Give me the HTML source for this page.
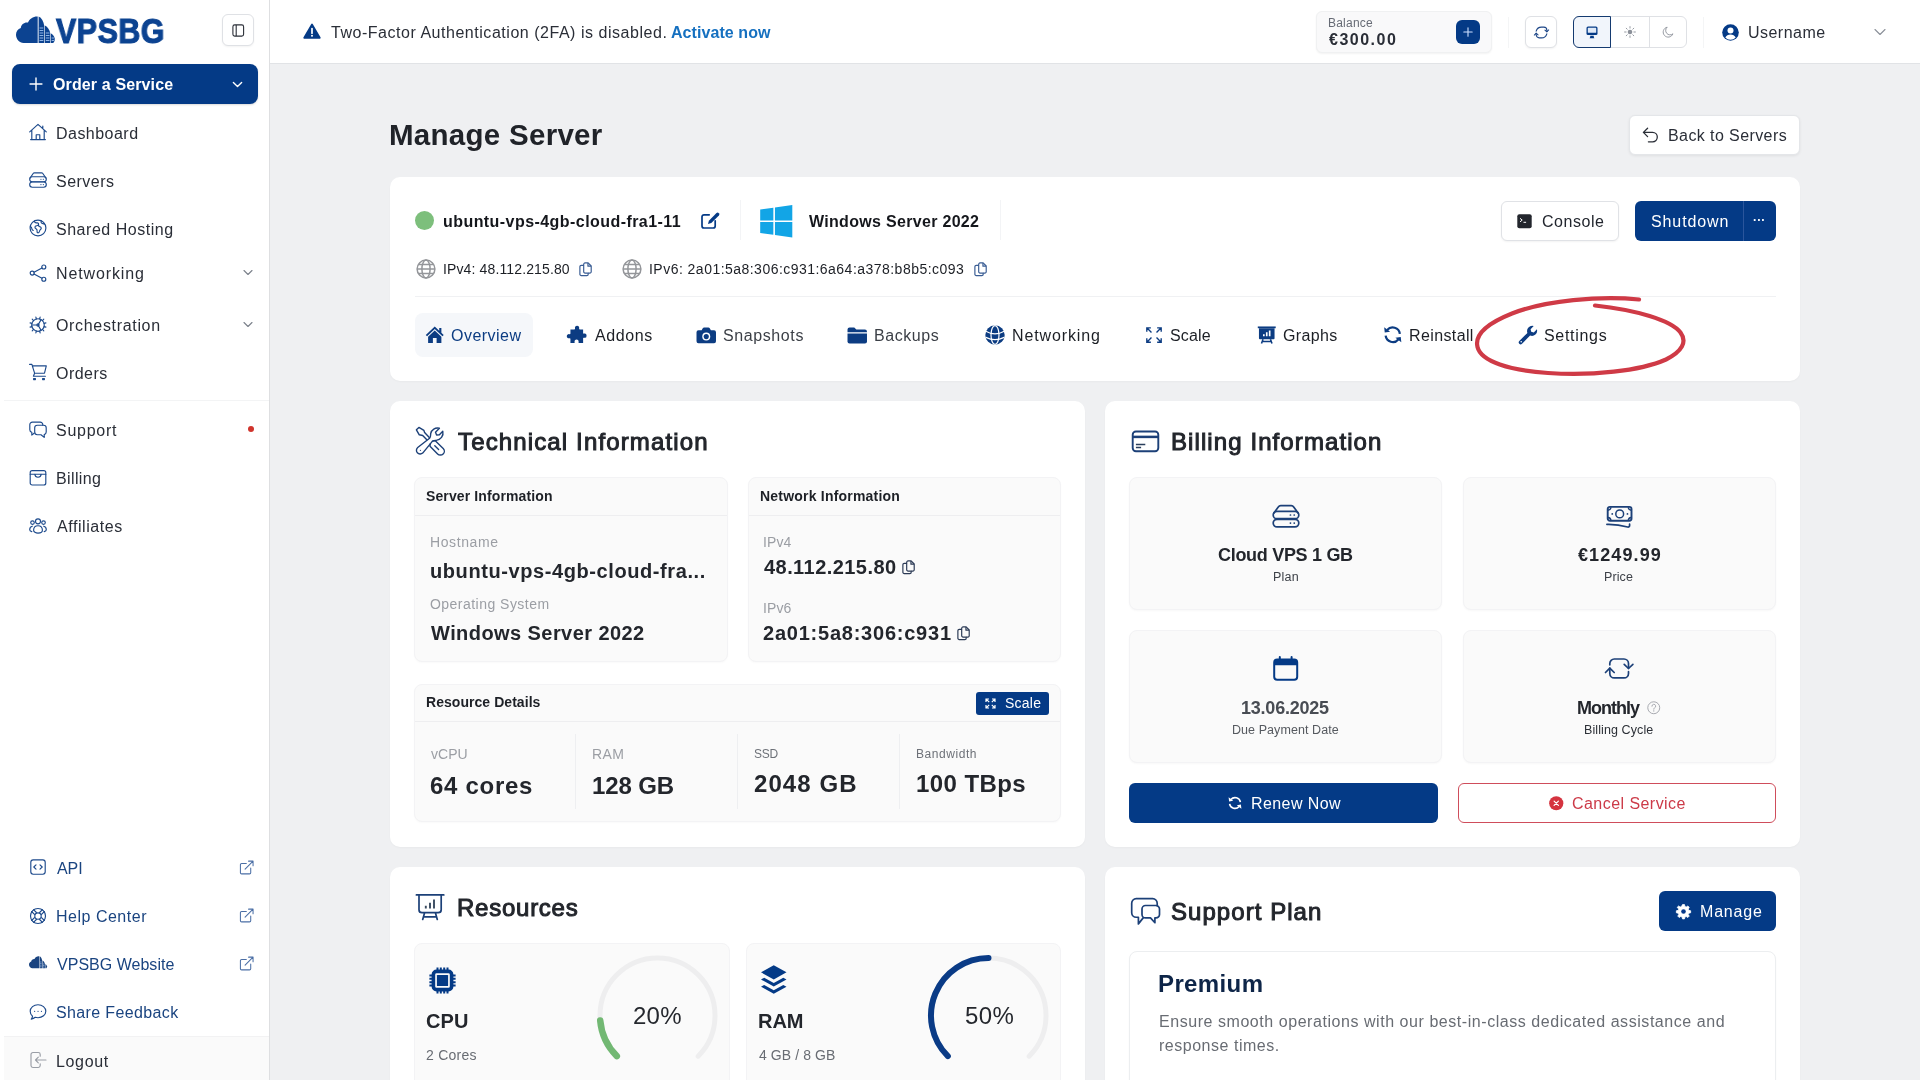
<!DOCTYPE html>
<html lang="en"><head><meta charset="utf-8"><title>Manage Server - VPSBG</title><style>
*{box-sizing:border-box}
html,body{margin:0;padding:0}
body{width:1920px;height:1080px;overflow:hidden;position:relative;background:#eff0f2;font-family:'Liberation Sans', sans-serif;color:#2a2e37}
.b{position:absolute}
.i{position:absolute;overflow:visible}
.t{position:absolute;white-space:pre;will-change:transform}
</style></head><body>
<div class="b" style="left:0px;top:0px;width:269px;height:1080px;background:#fff;"></div>
<div class="b" style="left:269px;top:0px;width:1px;height:1080px;background:#dedfe1;"></div>
<div class="b" style="left:270px;top:0px;width:1650px;height:63px;background:#fff;"></div>
<div class="b" style="left:270px;top:63px;width:1650px;height:1px;background:#e1e3e6;"></div>
<div class="b" style="left:222px;top:14px;width:32px;height:32px;background:#fff;border-radius:6px;border:1px solid #dfe1e5;box-shadow:0 1px 2px rgba(0,0,0,.05);"></div>
<div class="b" style="left:12px;top:64px;width:246px;height:40px;background:#043a86;border-radius:8px;box-shadow:0 1px 2px rgba(0,0,0,.15);"></div>
<div class="b" style="left:4px;top:400px;width:265px;height:1px;background:#f3f4f5;"></div>
<div class="b" style="left:247.5px;top:425.5px;width:6.5px;height:6.5px;background:#d0342c;border-radius:4px;"></div>
<div class="b" style="left:4px;top:1036px;width:265px;height:44px;background:#fafafa;border-top:1px solid #f2f2f3;"></div>
<div class="b" style="left:1316px;top:11px;width:176px;height:42px;background:#f9f9fa;border-radius:6px;border:1px solid #f0f1f2;box-shadow:0 1px 2px rgba(0,0,0,.05);"></div>
<div class="b" style="left:1456px;top:20px;width:24px;height:24px;background:#043a86;border-radius:6px;"></div>
<div class="b" style="left:1508px;top:17px;width:1px;height:31px;background:#f4f5f6;"></div>
<div class="b" style="left:1525px;top:16px;width:32px;height:32px;background:#fff;border-radius:6px;border:1px solid #dfe1e5;box-shadow:0 1px 2px rgba(0,0,0,.05);"></div>
<div class="b" style="left:1573px;top:16px;width:114px;height:32px;background:#fff;border-radius:6px;border:1px solid #dfe1e5;"></div>
<div class="b" style="left:1649px;top:17px;width:1px;height:30px;background:#dfe1e5;"></div>
<div class="b" style="left:1573px;top:16px;width:38px;height:32px;background:#f1f5fb;border:1px solid #143a70;border-radius:6px 0 0 6px;"></div>
<div class="b" style="left:1703px;top:17px;width:1px;height:31px;background:#f4f5f6;"></div>
<div class="b" style="left:1628.5px;top:115px;width:171px;height:39.5px;background:#fff;border-radius:6px;border:1px solid #e4e6e9;box-shadow:0 1px 3px rgba(0,0,0,.07);"></div>
<div class="b" style="left:390px;top:177px;width:1410px;height:203.5px;background:#fff;border-radius:10px;box-shadow:0 1px 2px rgba(0,0,0,.03);"></div>
<div class="b" style="left:414.5px;top:211px;width:19px;height:19px;background:#7dbf7c;border-radius:10px;"></div>
<div class="b" style="left:740px;top:200px;width:1px;height:40px;background:#f3f4f6;"></div>
<div class="b" style="left:1000px;top:200px;width:1px;height:40px;background:#f3f4f6;"></div>
<div class="b" style="left:415px;top:296px;width:1361px;height:1px;background:#f0f1f3;"></div>
<div class="b" style="left:414.5px;top:313px;width:118.5px;height:43.5px;background:#f5f7fa;border-radius:8px;"></div>
<div class="b" style="left:1501px;top:201px;width:117.5px;height:39.5px;background:#fff;border-radius:6px;border:1px solid #e0e2e6;box-shadow:0 1px 2px rgba(0,0,0,.05);"></div>
<div class="b" style="left:1635px;top:201px;width:141px;height:39.5px;background:#043a86;border-radius:6px;"></div>
<div class="b" style="left:1743px;top:201px;width:1px;height:39.5px;background:#2a559c;"></div>
<div class="b" style="left:390px;top:401px;width:695px;height:446px;background:#fff;border-radius:10px;box-shadow:0 1px 2px rgba(0,0,0,.03);"></div>
<div class="b" style="left:414px;top:477px;width:314px;height:185px;background:#fafafa;border-radius:8px;border:1px solid #f3f3f5;box-shadow:0 1px 2px rgba(0,0,0,.025);"></div>
<div class="b" style="left:415px;top:515px;width:312px;height:1px;background:#eeeef0;"></div>
<div class="b" style="left:748px;top:477px;width:312.5px;height:185px;background:#fafafa;border-radius:8px;border:1px solid #f3f3f5;box-shadow:0 1px 2px rgba(0,0,0,.025);"></div>
<div class="b" style="left:749px;top:515px;width:310.5px;height:1px;background:#eeeef0;"></div>
<div class="b" style="left:414px;top:684px;width:646.5px;height:138px;background:#fafafa;border-radius:8px;border:1px solid #f3f3f5;box-shadow:0 1px 2px rgba(0,0,0,.025);"></div>
<div class="b" style="left:415px;top:721.4px;width:644.5px;height:1px;background:#eeeef0;"></div>
<div class="b" style="left:976px;top:691.5px;width:72.5px;height:23.5px;background:#043a86;border-radius:3px;"></div>
<div class="b" style="left:575px;top:734px;width:1px;height:75px;background:#eeeff1;"></div>
<div class="b" style="left:737px;top:734px;width:1px;height:75px;background:#eeeff1;"></div>
<div class="b" style="left:899px;top:734px;width:1px;height:75px;background:#eeeff1;"></div>
<div class="b" style="left:1105px;top:401px;width:695px;height:446px;background:#fff;border-radius:10px;box-shadow:0 1px 2px rgba(0,0,0,.03);"></div>
<div class="b" style="left:1129px;top:477px;width:313px;height:132.5px;background:#fafafa;border-radius:8px;border:1px solid #f3f3f5;box-shadow:0 1px 2px rgba(0,0,0,.03);"></div>
<div class="b" style="left:1462.5px;top:477px;width:313.5px;height:132.5px;background:#fafafa;border-radius:8px;border:1px solid #f3f3f5;box-shadow:0 1px 2px rgba(0,0,0,.03);"></div>
<div class="b" style="left:1129px;top:630px;width:313px;height:132.5px;background:#fafafa;border-radius:8px;border:1px solid #f3f3f5;box-shadow:0 1px 2px rgba(0,0,0,.03);"></div>
<div class="b" style="left:1462.5px;top:630px;width:313.5px;height:132.5px;background:#fafafa;border-radius:8px;border:1px solid #f3f3f5;box-shadow:0 1px 2px rgba(0,0,0,.03);"></div>
<div class="b" style="left:1129px;top:783px;width:308.5px;height:40px;background:#043a86;border-radius:6px;"></div>
<div class="b" style="left:1458px;top:783px;width:318px;height:40px;background:#fff;border-radius:6px;border:1px solid #cf4d5b;"></div>
<div class="b" style="left:390px;top:867px;width:695px;height:240px;background:#fff;border-radius:10px;box-shadow:0 1px 2px rgba(0,0,0,.03);"></div>
<div class="b" style="left:414px;top:943px;width:315.5px;height:160px;background:#fafafa;border-radius:8px;border:1px solid #f3f3f5;"></div>
<div class="b" style="left:746px;top:943px;width:314.5px;height:160px;background:#fafafa;border-radius:8px;border:1px solid #f3f3f5;"></div>
<div class="b" style="left:1105px;top:867px;width:695px;height:240px;background:#fff;border-radius:10px;box-shadow:0 1px 2px rgba(0,0,0,.03);"></div>
<div class="b" style="left:1658.5px;top:891px;width:117.5px;height:40px;background:#043a86;border-radius:6px;"></div>
<div class="b" style="left:1129px;top:951px;width:647px;height:160px;background:#fff;border-radius:8px;border:1px solid #eceef0;box-shadow:0 1px 2px rgba(0,0,0,.03);"></div>
<svg class="i" style="left:231.8px;top:23.5px" width="12.5" height="13" viewBox="0 0 12.500 13" ><rect x=".9" y=".9" width="10.700" height="11.200" rx="1.800" fill="none" stroke="#2a2e37" stroke-width="1.100"/><path d="M4.200 .9v11.200" stroke="#2a2e37" stroke-width="1.100"/></svg>
<svg class="i" style="left:29px;top:77px" width="14" height="14" viewBox="0 0 16 16" ><path d="M8 1.2v13.6M1.2 8h13.6" stroke="#fff" stroke-width="1.6" stroke-linecap="round"/></svg>
<svg class="i" style="left:232px;top:79px" width="11" height="11" viewBox="0 0 16 16" ><path d="M2 5l6 6 6-6" fill="none" stroke="#fff" stroke-width="2" stroke-linecap="round" stroke-linejoin="round"/></svg>
<svg class="i" style="left:29px;top:123.30000000000001px" width="18" height="18" viewBox="0 0 18 18" ><path d="M.7 8.900L9 1.400l8.300 7.500M2.800 7.200v9.400M15.200 7.200v9.400M1.600 16.600h14.800M7.200 16.600v-4.900h3.600v4.900M13.800 5.400V3" fill="none" stroke="#1d4a8c" stroke-width="1.15" stroke-linecap="round" stroke-linejoin="round"/></svg>
<svg class="i" style="left:29px;top:171.3px" width="18" height="18" viewBox="0 0 18 18" ><rect x=".7" y="5.700" width="16.600" height="5" rx="2.500" fill="none" stroke="#1d4a8c" stroke-width="1.15" stroke-linecap="round" stroke-linejoin="round"/><rect x=".7" y="11" width="16.600" height="5.200" rx="2.600" fill="none" stroke="#1d4a8c" stroke-width="1.15" stroke-linecap="round" stroke-linejoin="round"/><path d="M1.100 7L4 2.700a2 2 0 0 1 1.600-.9h6.800a2 2 0 0 1 1.600.9L16.900 7" fill="none" stroke="#1d4a8c" stroke-width="1.15" stroke-linecap="round" stroke-linejoin="round"/><path d="M11.900 8.200h.1M14.300 8.200h.1M11.900 13.600h.1M14.300 13.600h.1" fill="none" stroke="#1d4a8c" stroke-width="1.15" stroke-linecap="round" stroke-linejoin="round"/></svg>
<svg class="i" style="left:29px;top:219.3px" width="18" height="18" viewBox="0 0 18 18" ><circle cx="9" cy="9" r="7.900" fill="none" stroke="#1d4a8c" stroke-width="1.15" stroke-linecap="round" stroke-linejoin="round"/><path d="M5.300 2.200c.3 1.300 1.300 1.900 2.600 1.700 1.400-.2 2 .8 1.500 1.800-.5 1-1.800.9-2.700 1.400-1 .6-.9 1.900.1 2.500 1 .6 1.600 1.300 1.300 2.600-.2 1 .3 1.700 1 1.700.9 0 1.300-.9 1.500-1.900.2-1 1.100-1.400 1.500-2.300.4-.9-.2-1.800-1.200-2-1-.2-1.500-.9-1.200-1.700M12.300 1.900c-.5.900-.3 1.800.5 2.300.9.500 1.900.3 2.700 1M1.300 7.600c.9.300 1.500 1 1.500 1.900 0 .9.600 1.500 1.400 1.900" fill="none" stroke="#1d4a8c" stroke-width="1.15" stroke-linecap="round" stroke-linejoin="round"/></svg>
<svg class="i" style="left:29px;top:263.6px" width="18" height="18" viewBox="0 0 18 18" ><circle cx="14.800" cy="3" r="2" fill="none" stroke="#1d4a8c" stroke-width="1.15" stroke-linecap="round" stroke-linejoin="round"/><circle cx="3.200" cy="9.100" r="2" fill="none" stroke="#1d4a8c" stroke-width="1.15" stroke-linecap="round" stroke-linejoin="round"/><circle cx="14.800" cy="15.200" r="2" fill="none" stroke="#1d4a8c" stroke-width="1.15" stroke-linecap="round" stroke-linejoin="round"/><path d="M5 8.200l8-4.200M5 10l8 4.200" fill="none" stroke="#1d4a8c" stroke-width="1.15" stroke-linecap="round" stroke-linejoin="round"/></svg>
<svg class="i" style="left:29px;top:315.8px" width="18" height="18" viewBox="0 0 18 18" ><circle cx="9" cy="9" r="6.300" fill="none" stroke="#1d4a8c" stroke-width="1.15" stroke-linecap="round" stroke-linejoin="round"/><path d="M15.09 10.63L16.92 11.12M13.45 13.45L14.80 14.80M10.63 15.09L11.12 16.92M7.37 15.09L6.88 16.92M4.55 13.45L3.20 14.80M2.91 10.63L1.08 11.12M2.91 7.37L1.08 6.88M4.55 4.55L3.20 3.20M7.37 2.91L6.88 1.08M10.63 2.91L11.12 1.08M13.45 4.55L14.80 3.20M15.09 7.37L16.92 6.88" fill="none" stroke="#1d4a8c" stroke-width="1.15" stroke-linecap="round" stroke-linejoin="round" stroke-width="1.500" stroke-linecap="butt"/><path d="M9 9L2.800 9M9 9l3.100 5.400M9 9l3.100-5.400" fill="none" stroke="#1d4a8c" stroke-width="1.15" stroke-linecap="round" stroke-linejoin="round"/><circle cx="9" cy="9" r="1.100" fill="none" stroke="#1d4a8c" stroke-width="1.15" stroke-linecap="round" stroke-linejoin="round"/></svg>
<svg class="i" style="left:29px;top:363.3px" width="18" height="18" viewBox="0 0 18 18" ><path d="M.6 1.400h2.300l1 3M3.300 2.900h14l-1.800 7.300H5.600zM5.600 10.200l-1.200 3h12" fill="none" stroke="#1d4a8c" stroke-width="1.15" stroke-linecap="round" stroke-linejoin="round"/><path d="M4.600 15.600h1.800v1h-1.800zM13.600 15.600h1.800v1h-1.800z" fill="none" stroke="#1d4a8c" stroke-width="1.15" stroke-linecap="round" stroke-linejoin="round"/></svg>
<svg class="i" style="left:29px;top:421px" width="18" height="18" viewBox="0 0 18 18" ><path d="M13.800 4.200V3.700a2.600 2.600 0 0 0-2.600-2.600H3.400A2.600 2.600 0 0 0 .8 3.700v5a2.600 2.600 0 0 0 2 2.500v2.900l2.300-1.900" fill="none" stroke="#1d4a8c" stroke-width="1.15" stroke-linecap="round" stroke-linejoin="round"/><path d="M8.300 4.200h6.300a2.600 2.600 0 0 1 2.600 2.600v4.300a2.600 2.600 0 0 1-2 2.500v2.800l-3.200-2.700H8.300a2.600 2.600 0 0 1-2.600-2.600V6.800a2.600 2.600 0 0 1 2.600-2.600z" fill="none" stroke="#1d4a8c" stroke-width="1.15" stroke-linecap="round" stroke-linejoin="round"/></svg>
<svg class="i" style="left:29px;top:469px" width="18" height="18" viewBox="0 0 18 18" ><rect x="1.200" y="1.600" width="15.600" height="14.400" rx="2" fill="none" stroke="#1d4a8c" stroke-width="1.15" stroke-linecap="round" stroke-linejoin="round"/><path d="M1.200 5.200h15.600M5.800 5.200c.2 1.900 1.500 3 3.200 3s3-1.100 3.200-3" fill="none" stroke="#1d4a8c" stroke-width="1.15" stroke-linecap="round" stroke-linejoin="round"/></svg>
<svg class="i" style="left:29px;top:517px" width="18" height="18" viewBox="0 0 18 18" ><circle cx="9" cy="4.300" r="2.500" fill="none" stroke="#1d4a8c" stroke-width="1.15" stroke-linecap="round" stroke-linejoin="round"/><path d="M4.600 13.300c0-2.900 1.900-4.600 4.400-4.600s4.400 1.700 4.400 4.600c0 1.600-2 2.800-4.400 2.800s-4.400-1.200-4.400-2.800z" fill="none" stroke="#1d4a8c" stroke-width="1.15" stroke-linecap="round" stroke-linejoin="round"/><circle cx="3.500" cy="5.600" r="1.800" fill="none" stroke="#1d4a8c" stroke-width="1.15" stroke-linecap="round" stroke-linejoin="round"/><circle cx="14.500" cy="5.600" r="1.800" fill="none" stroke="#1d4a8c" stroke-width="1.15" stroke-linecap="round" stroke-linejoin="round"/><path d="M3.300 9.200C1.700 9.500.7 10.900.7 12.700c0 .9.900 1.600 2.100 1.900M14.700 9.200c1.600.3 2.600 1.700 2.600 3.500 0 .9-.9 1.600-2.100 1.900" fill="none" stroke="#1d4a8c" stroke-width="1.15" stroke-linecap="round" stroke-linejoin="round"/></svg>
<svg class="i" style="left:243px;top:267.5px" width="10" height="9" viewBox="0 0 10 9" ><path d="M1 2.500l4 4 4-4" fill="none" stroke="#7a808a" stroke-width="1.1" stroke-linecap="round" stroke-linejoin="round"/></svg>
<svg class="i" style="left:243px;top:319.5px" width="10" height="9" viewBox="0 0 10 9" ><path d="M1 2.500l4 4 4-4" fill="none" stroke="#7a808a" stroke-width="1.1" stroke-linecap="round" stroke-linejoin="round"/></svg>
<svg class="i" style="left:29px;top:858.3px" width="18" height="18" viewBox="0 0 18 18" ><rect x="1.800" y="1.800" width="14.400" height="14.400" rx="2.400" fill="none" stroke="#1d4a8c" stroke-width="1.15" stroke-linecap="round" stroke-linejoin="round"/><path d="M7 6.800L4.800 9 7 11.200M11 6.800L13.200 9 11 11.200" fill="none" stroke="#1d4a8c" stroke-width="1.15" stroke-linecap="round" stroke-linejoin="round"/></svg>
<svg class="i" style="left:29px;top:907px" width="18" height="18" viewBox="0 0 18 18" ><circle cx="9" cy="9" r="7.500" fill="none" stroke="#1d4a8c" stroke-width="1.15" stroke-linecap="round" stroke-linejoin="round"/><circle cx="9" cy="9" r="3.200" fill="none" stroke="#1d4a8c" stroke-width="1.15" stroke-linecap="round" stroke-linejoin="round"/><path d="M4.500 2.600l2.900 2.900M2.600 4.500l2.900 2.900M13.500 2.600l-2.900 2.900M15.400 4.500l-2.900 2.900M4.500 15.400l2.900-2.900M2.600 13.500l2.900-2.900M13.500 15.400l-2.900-2.900M15.400 13.500l-2.900-2.900" fill="none" stroke="#1d4a8c" stroke-width="1.15" stroke-linecap="round" stroke-linejoin="round" stroke-width=".9"/></svg>
<svg class="i" style="left:29px;top:954.3px" width="18" height="18" viewBox="0 0 18 18" ><path d="M10 2.200C8.100 2 6.300 3.100 5.500 4.900 3.900 4.700 2.400 5.800 2.200 7.400.900 7.900 0 9.100 0 10.500c0 1.900 1.500 3.700 3.400 3.700H10z" fill="#1a4480"/><path d="M10.500 2.200c1.400.5 2.300 2.100 2.600 4.400v7.600h-2.600z" fill="#1a4480"/><path d="M13.500 6.400c1.300.6 2.200 2 2.500 3.800v4h-2.500z" fill="#1a4480"/><path d="M16.400 10.100c.8.500 1.400 1.200 1.600 2.200.1.800-.1 1.400-.6 1.900h-1z" fill="#1a4480"/><path d="M11 8h1.600M11 9.600h1.600M11 11.200h1.600M11 12.800h1.600M14 10h1.500M14 11.500h1.500M14 13h1.500" stroke="#9bb8e4" stroke-width=".7"/></svg>
<svg class="i" style="left:29px;top:1002.8px" width="18" height="18" viewBox="0 0 18 18" ><path d="M9 1.700c4.300 0 7.800 2.900 7.800 6.500s-3.500 6.500-7.800 6.500c-1 0-1.900-.100-2.800-.400-1 .9-2.300 1.600-3.900 1.800.7-.9 1.100-1.900 1.200-2.900-1.400-1.200-2.300-3-2.300-5 0-3.600 3.500-6.500 7.800-6.500z" fill="none" stroke="#1d4a8c" stroke-width="1.15" stroke-linecap="round" stroke-linejoin="round"/><path d="M5.600 8.300h.1M9 8.300h.1M12.400 8.300h.1" fill="none" stroke="#1d4a8c" stroke-width="1.15" stroke-linecap="round" stroke-linejoin="round" stroke-width="1.600"/></svg>
<svg class="i" style="left:29px;top:1051.3px" width="18" height="18" viewBox="0 0 18 18" ><path d="M11.200 5.200V3.400A1.900 1.900 0 0 0 9.300 1.500H3.900A1.900 1.900 0 0 0 2 3.400v11.200a1.900 1.900 0 0 0 1.900 1.900h5.400a1.900 1.900 0 0 0 1.900-1.900v-1.800" fill="none" stroke="#9a9ea6" stroke-width="1.150" stroke-linecap="round" stroke-linejoin="round"/><path d="M17 9H6.500M9.300 6.200L6.500 9l2.800 2.800" fill="none" stroke="#9a9ea6" stroke-width="1.150" stroke-linecap="round" stroke-linejoin="round"/></svg>
<svg class="i" style="left:238.5px;top:859.5px" width="15" height="15" viewBox="0 0 16 16" ><path d="M12.500 8.500v5a1.300 1.300 0 0 1-1.300 1.300H2.800a1.300 1.300 0 0 1-1.300-1.300V5.100a1.300 1.300 0 0 1 1.300-1.300h5" fill="none" stroke="#4a6ea5" stroke-width="1.100" stroke-linecap="round"/><path d="M6.500 9.800L15 1.300M10.200 1.200H15v4.800" fill="none" stroke="#4a6ea5" stroke-width="1.100" stroke-linecap="round" stroke-linejoin="round"/></svg>
<svg class="i" style="left:238.5px;top:907.5px" width="15" height="15" viewBox="0 0 16 16" ><path d="M12.500 8.500v5a1.300 1.300 0 0 1-1.300 1.300H2.800a1.300 1.300 0 0 1-1.300-1.300V5.100a1.300 1.300 0 0 1 1.300-1.300h5" fill="none" stroke="#4a6ea5" stroke-width="1.100" stroke-linecap="round"/><path d="M6.500 9.800L15 1.300M10.200 1.200H15v4.800" fill="none" stroke="#4a6ea5" stroke-width="1.100" stroke-linecap="round" stroke-linejoin="round"/></svg>
<svg class="i" style="left:238.5px;top:955.5px" width="15" height="15" viewBox="0 0 16 16" ><path d="M12.500 8.500v5a1.300 1.300 0 0 1-1.300 1.300H2.800a1.300 1.300 0 0 1-1.300-1.300V5.100a1.300 1.300 0 0 1 1.300-1.300h5" fill="none" stroke="#4a6ea5" stroke-width="1.100" stroke-linecap="round"/><path d="M6.500 9.800L15 1.300M10.200 1.200H15v4.800" fill="none" stroke="#4a6ea5" stroke-width="1.100" stroke-linecap="round" stroke-linejoin="round"/></svg>
<svg class="i" style="left:16px;top:16px" width="39" height="28" viewBox="0 0 39 28" ><path d="M21.7 0.500C17.500 0.200 13.600 2.600 12 6.500 8.400 5.900 5.200 8.400 4.800 11.900 1.900 12.900 0 15.600 0 18.700c0 4.200 3.400 8.300 7.600 8.300H21.700z" fill="#0c4391"/>
<path d="M22.600 0.400c3 1.200 5 4.600 5.700 9.600V27h-5.700z" fill="#0c4391"/>
<path d="M28.900 9.400c2.800 1.400 4.800 4.400 5.500 8.300V27h-5.500z" fill="#0c4391"/>
<path d="M35 17.600c1.800 1 3.200 2.600 3.700 4.900.3 1.800-.3 3.400-1.500 4.500H35z" fill="#0c4391"/>
<path d="M23.600 12h3.700M23.600 14.500h3.700M23.600 17h3.700M23.600 19.500h3.700M23.600 22h3.700M23.600 24.500h3.700M29.800 17h3.700M29.800 19.500h3.700M29.800 22h3.700M29.800 24.500h3.700M35.600 22h2.400M35.600 24.500h2.400" stroke="#8fb4e6" stroke-width="1.200"/></svg>
<span class="t" style="left:56.200px;top:10.900px;font-size:34.500px;line-height:40px;font-weight:700;color:#0c4391;-webkit-text-stroke:1.100px #0c4391;letter-spacing:.6px;transform-origin:0 0;transform:scaleX(.881)">VPSBG</span>
<svg class="i" style="left:303px;top:23px" width="18" height="16" viewBox="0 0 18 16" ><path d="M9.900 1.200l7.600 13a1.100 1.100 0 0 1-.95 1.650H1.450A1.100 1.100 0 0 1 .5 14.200L8.100 1.200a1.050 1.050 0 0 1 1.800 0z" fill="#043a86"/><path d="M9 5.600v4.600" stroke="#fff" stroke-width="1.700" stroke-linecap="round"/><circle cx="9" cy="12.700" r="1" fill="#fff"/></svg>
<svg class="i" style="left:1463px;top:27px" width="10" height="10" viewBox="0 0 10 10" ><path d="M5 .8v8.400M.8 5h8.400" stroke="#cfe0ff" stroke-width="1.100" stroke-linecap="round"/></svg>
<svg class="i" style="left:1533.5px;top:24.5px" width="15" height="15" viewBox="0 0 16 16" ><path d="M2.300 6.600A5.900 5.900 0 0 1 8 2.300h2.500a3.200 3.200 0 0 1 3.200 3.200v1.400M13.700 9.400A5.900 5.900 0 0 1 8 13.700H5.500a3.200 3.200 0 0 1-3.200-3.200V9.100" fill="none" stroke="#1d4687" stroke-width="1.15" stroke-linecap="round"/><path d="M11.700 5.400l2 1.900 1.900-2M4.300 10.600l-2-1.900-1.900 2" fill="none" stroke="#1d4687" stroke-width="1.15" stroke-linecap="round" stroke-linejoin="round"/></svg>
<svg class="i" style="left:1586px;top:25.5px" width="12" height="13" viewBox="0 0 12 13" ><rect x=".5" y=".5" width="11" height="8.600" rx="1.500" fill="#043a86"/><rect x="1.800" y="1.800" width="8.400" height="5" rx=".6" fill="#dfe9f7"/><path d="M3.600 12.300c.5-.8.700-1.500.7-2.600h3.400c0 1.100.2 1.800.7 2.600z" fill="#043a86"/></svg>
<svg class="i" style="left:1624px;top:26px" width="12" height="12" viewBox="0 0 12 12" ><circle cx="6" cy="6" r="2.300" fill="#8b9099"/><path d="M6 .6v1.500M6 9.900v1.500M.6 6h1.500M9.900 6h1.500M2.200 2.200l1 1M8.800 8.800l1 1M2.200 9.800l1-1M8.800 3.200l1-1" stroke="#8b9099" stroke-width=".9" stroke-linecap="round"/></svg>
<svg class="i" style="left:1662px;top:26px" width="12" height="12" viewBox="0 0 12 12" ><path d="M5.200 1.200A5 5 0 1 0 10.900 7.800 4.300 4.300 0 0 1 5.200 1.200z" fill="none" stroke="#8b9099" stroke-width=".9" stroke-linejoin="round"/></svg>
<svg class="i" style="left:1721.5px;top:23.5px" width="17" height="17" viewBox="0 0 17 17" ><circle cx="8.500" cy="8.500" r="8.300" fill="#043a86"/><circle cx="8.500" cy="6.600" r="3" fill="#fff"/><path d="M3.300 13.400c1-2 2.900-3 5.200-3s4.200 1 5.200 3a6.600 6.600 0 0 1-5.200 2.400 6.600 6.600 0 0 1-5.200-2.400z" fill="#fff"/></svg>
<svg class="i" style="left:1874px;top:28px" width="12" height="8" viewBox="0 0 12 8" ><path d="M1 1.500l5 5 5-5" fill="none" stroke="#8b9099" stroke-width="1.100" stroke-linecap="round" stroke-linejoin="round"/></svg>
<svg class="i" style="left:1641.5px;top:126px" width="18" height="18" viewBox="0 0 18 18" ><path d="M5.600 2.200L1.400 6.400l4.200 4.200M1.400 6.400h9.200a4.700 4.700 0 0 1 0 9.400H6.400" fill="none" stroke="#2a2e37" stroke-width="1.300" stroke-linecap="round" stroke-linejoin="round"/></svg>
<svg class="i" style="left:701px;top:212px" width="18" height="17" viewBox="0 0 18 17" ><path d="M15.500 1.100a1.700 1.700 0 0 1 2.400 2.400l-7.600 7.600-3.300.9.900-3.300z" fill="#043a86"/><path d="M8.200 2.800H3a2 2 0 0 0-2 2V14a2 2 0 0 0 2 2h9.200a2 2 0 0 0 2-2V8.800" fill="none" stroke="#043a86" stroke-width="1.700" stroke-linecap="round"/></svg>
<svg class="i" style="left:759.5px;top:204.5px" width="32.5" height="32.5" viewBox="0 0 32 32.400" ><path d="M0 4.600L13.100 2.800V15.400H0zM14.700 2.600L32 0v15.400H14.700zM0 17h13.100v12.600L0 27.800zM14.700 17H32v15.400L14.700 29.800z" fill="#12a5e6"/></svg>
<svg class="i" style="left:415.5px;top:258.5px" width="20" height="20" viewBox="0 0 20 20" ><circle cx="10" cy="10" r="8.900" fill="none" stroke="#94969a" stroke-width="1.5"/><ellipse cx="10" cy="10" rx="4.100" ry="8.900" fill="none" stroke="#94969a" stroke-width="1.5"/><path d="M1.100 10h17.800M2.400 5.600h15.200M2.400 14.400h15.200" fill="none" stroke="#94969a" stroke-width="1.5"/></svg>
<svg class="i" style="left:579px;top:262px" width="13" height="14.5" viewBox="0 0 14 16" ><path d="M5 3.700V2.500A1.500 1.500 0 0 1 6.500 1h3.400l3.400 3.400v6.300a1.500 1.500 0 0 1-1.500 1.500H10" fill="none" stroke="#3a5d94" stroke-width="1.3" stroke-linejoin="round"/><path d="M9.700 1.200v3.400h3.400" fill="none" stroke="#3a5d94" stroke-width="1.3" stroke-linejoin="round"/><path d="M5 3.700H2.300A1.500 1.500 0 0 0 .8 5.200v8.300A1.500 1.500 0 0 0 2.300 15h6.200A1.500 1.500 0 0 0 10 13.500V12.200H6.500A1.500 1.500 0 0 1 5 10.700z" fill="none" stroke="#3a5d94" stroke-width="1.3" stroke-linejoin="round"/></svg>
<svg class="i" style="left:622px;top:258.5px" width="20" height="20" viewBox="0 0 20 20" ><circle cx="10" cy="10" r="8.900" fill="none" stroke="#94969a" stroke-width="1.5"/><ellipse cx="10" cy="10" rx="4.100" ry="8.900" fill="none" stroke="#94969a" stroke-width="1.5"/><path d="M1.100 10h17.800M2.400 5.600h15.200M2.400 14.400h15.200" fill="none" stroke="#94969a" stroke-width="1.5"/></svg>
<svg class="i" style="left:974px;top:262px" width="13" height="14.5" viewBox="0 0 14 16" ><path d="M5 3.700V2.500A1.500 1.500 0 0 1 6.500 1h3.400l3.400 3.400v6.300a1.500 1.500 0 0 1-1.500 1.500H10" fill="none" stroke="#3a5d94" stroke-width="1.3" stroke-linejoin="round"/><path d="M9.700 1.200v3.400h3.400" fill="none" stroke="#3a5d94" stroke-width="1.3" stroke-linejoin="round"/><path d="M5 3.700H2.300A1.500 1.500 0 0 0 .8 5.200v8.300A1.500 1.500 0 0 0 2.300 15h6.200A1.500 1.500 0 0 0 10 13.500V12.200H6.500A1.500 1.500 0 0 1 5 10.700z" fill="none" stroke="#3a5d94" stroke-width="1.3" stroke-linejoin="round"/></svg>
<svg class="i" style="left:425px;top:325.25px" width="19.5" height="19.5" viewBox="0 0 20 20" ><path d="M10 1.600L.8 10.300l1.300 1.300L10 4.200l7.900 7.400 1.300-1.300-2.400-2.300V3h-2.200v2.900z" fill="#0c3c82"/><path d="M10 5.700l-6.800 6.400v6.300h4.900v-5h3.800v5h4.900v-6.300z" fill="#0c3c82"/></svg>
<svg class="i" style="left:567.5px;top:325.25px" width="19.5" height="19.5" viewBox="0 0 20 20" ><path d="M7.200 3.600a2.200 2.200 0 1 1 4.200 0c-.1.500.1.900.6.900h3.500v3.800c0 .5.400.7.900.5a2.200 2.200 0 1 1 0 4.300c-.5-.2-.9 0-.9.500v4.900h-4.200c-.5 0-.7-.4-.5-.9a2.100 2.100 0 1 0-4 0c.2.500 0 .9-.5.900H2.500v-4.300c0-.5-.4-.7-.9-.6a2.200 2.200 0 1 1 0-4.200c.5.100.9-.1.900-.6V4.500h4.100c.5 0 .7-.4.600-.9z" fill="#0c3c82"/></svg>
<svg class="i" style="left:696px;top:324.75px" width="20.5" height="20.5" viewBox="0 0 20 20" ><path d="M6.600 3.200L5.500 5.200H2.400A1.900 1.900 0 0 0 .5 7.100v8.800a1.900 1.900 0 0 0 1.900 1.900h15.200a1.900 1.900 0 0 0 1.900-1.900V7.100a1.900 1.900 0 0 0-1.900-1.900h-3.100l-1.100-2a1.500 1.500 0 0 0-1.300-.8H7.900a1.500 1.500 0 0 0-1.300.8z" fill="#0c3c82"/><circle cx="10" cy="11.300" r="3.900" fill="#fff"/><circle cx="10" cy="11.300" r="2.500" fill="#0c3c82"/></svg>
<svg class="i" style="left:847.4px;top:324.75px" width="20.5" height="20.5" viewBox="0 0 20 20" ><path d="M.5 4.500A2 2 0 0 1 2.500 2.500h4.600l2 2h8.400a2 2 0 0 1 2 2v.5H.5z" fill="#0c3c82"/><path d="M.5 8.300h19v7.700a2 2 0 0 1-2 2h-15a2 2 0 0 1-2-2z" fill="#0c3c82"/></svg>
<svg class="i" style="left:984.5px;top:325.0px" width="20" height="20" viewBox="0 0 20 20" ><circle cx="10" cy="10" r="9.700" fill="#0c3c82"/><ellipse cx="10" cy="10" rx="4" ry="9.400" fill="none" stroke="#fff" stroke-width="1.200"/><path d="M.8 6.200Q10 11.400 19.200 6.200M.8 12.400Q10 17 19.200 12.400" fill="none" stroke="#fff" stroke-width="1.200"/></svg>
<svg class="i" style="left:1145px;top:326.0px" width="18" height="18" viewBox="0 0 20 20" ><path d="M2 6.500V2h4.500M2.300 2.300l4.900 4.900M13.500 2H18v4.500M17.700 2.300l-4.900 4.900M2 13.500V18h4.500M2.300 17.700l4.900-4.900M18 13.500V18h-4.500M17.700 17.700l-4.900-4.900" fill="none" stroke="#0c3c82" stroke-width="1.500"/></svg>
<svg class="i" style="left:1257px;top:325.25px" width="19.5" height="19.5" viewBox="0 0 20 20" ><path d="M.8 1.500h18.400v1.800H.8z" fill="#0c3c82"/><path d="M2 3.300h16v10.200a1 1 0 0 1-1 1H3a1 1 0 0 1-1-1z" fill="#0c3c82"/><path d="M7 11.500V9.400M10 11.500V7.400M13 11.500V5.600" stroke="#fff" stroke-width="1.700"/><path d="M6.200 14.500L4.600 19M13.800 14.500l1.600 4.500M5.500 17h9" stroke="#0c3c82" stroke-width="1.600"/></svg>
<svg class="i" style="left:1383.3px;top:325.25px" width="19.5" height="19.5" viewBox="0 0 20 20" ><path d="M17.300 9A7.400 7.400 0 0 0 4.300 5.200M2.700 11a7.400 7.400 0 0 0 13 3.800" fill="none" stroke="#0c3c82" stroke-width="2.300"/><path d="M1.200 2.200l.6 5.600 5.500-1zM18.800 17.800l-.6-5.600-5.500 1z" fill="#0c3c82"/></svg>
<svg class="i" style="left:1517.6px;top:325.0px" width="20" height="20" viewBox="0 0 20 20" ><path d="M18.900 4.300l-3.100 3.100-2.600-.6-.6-2.600L15.700 1.100A5.200 5.200 0 0 0 9.400 7.900L1.300 16a1.900 1.900 0 0 0 2.700 2.700l8.100-8.100a5.200 5.200 0 0 0 6.800-6.300zM3.200 17.600a.8.800 0 1 1 0-1.600.8.800 0 0 1 0 1.600z" fill="#0c3c82"/></svg>
<svg class="i" style="left:1517px;top:213.5px" width="15" height="14.5" viewBox="0 0 15 14.500" ><rect x=".3" y=".3" width="14.400" height="13.900" rx="2" fill="#23262d"/><path d="M3 4.300l2.200 1.800L3 7.900M6.500 8.300h2.600" fill="none" stroke="#fff" stroke-width="1"/></svg>
<svg class="i" style="left:1460px;top:285px" width="240" height="100" viewBox="1460 285 240 100"><path d="M1639 299.500C1600 295.500 1545 300.500 1512 313.500 1487 323.500 1474.500 335 1477.500 347 1481 361.500 1510 370.500 1548 373 1592 376 1640 371 1666 359.500 1682 351.500 1687.500 342 1680.500 332.500 1671 320 1636 310 1595 305.500" fill="none" stroke="#cf3a46" stroke-width="4.200" stroke-linecap="round"/></svg>
<svg class="i" style="left:416px;top:427px" width="28" height="28" viewBox="0 0 28 28" ><path d="M23.400 1.300C19.400 .3 15.300 2.500 14.700 6.700c-.2 1.700.1 3.300-1.100 4.500L1.700 20.500a3.600 3.600 0 0 0 5 5.600l9.400-11.500c1-1.200 2.500-1 4.100-1.200 4.400-.6 7.700-4.400 6.600-9.100l-3.400 3.500-2.800.2-1.100-2.700z" fill="none" stroke="#1c4078" stroke-width="1.400" stroke-linecap="round" stroke-linejoin="round"/><path d="M10.800 12.700L6.700 8.500l-3.400-.7L.4 2.800 2.900.4l5 3 .7 2.200 4.700 4.900M16.400 14.100l2.600-.5 8.200 7.800a3.900 3.900 0 0 1-5.600 5.500L14 19.200l.3-2.500M18.800 18.800l3.800 3.600" fill="none" stroke="#1c4078" stroke-width="1.400" stroke-linecap="round" stroke-linejoin="round"/><circle cx="4.400" cy="23.300" r=".6" fill="#1c4078"/></svg>
<svg class="i" style="left:902.3px;top:560px" width="13" height="14.5" viewBox="0 0 14 16" ><path d="M5 3.700V2.500A1.500 1.500 0 0 1 6.500 1h3.400l3.400 3.400v6.300a1.500 1.500 0 0 1-1.500 1.500H10" fill="none" stroke="#2b3a55" stroke-width="1.3" stroke-linejoin="round"/><path d="M9.700 1.200v3.400h3.400" fill="none" stroke="#2b3a55" stroke-width="1.3" stroke-linejoin="round"/><path d="M5 3.700H2.300A1.500 1.500 0 0 0 .8 5.200v8.300A1.500 1.500 0 0 0 2.300 15h6.200A1.500 1.500 0 0 0 10 13.500V12.200H6.500A1.500 1.500 0 0 1 5 10.700z" fill="none" stroke="#2b3a55" stroke-width="1.3" stroke-linejoin="round"/></svg>
<svg class="i" style="left:957.3px;top:626px" width="13" height="14.5" viewBox="0 0 14 16" ><path d="M5 3.700V2.500A1.500 1.500 0 0 1 6.500 1h3.400l3.400 3.400v6.300a1.500 1.500 0 0 1-1.500 1.500H10" fill="none" stroke="#2b3a55" stroke-width="1.3" stroke-linejoin="round"/><path d="M9.700 1.200v3.400h3.400" fill="none" stroke="#2b3a55" stroke-width="1.3" stroke-linejoin="round"/><path d="M5 3.700H2.300A1.500 1.500 0 0 0 .8 5.200v8.300A1.500 1.500 0 0 0 2.300 15h6.200A1.500 1.500 0 0 0 10 13.500V12.200H6.500A1.500 1.500 0 0 1 5 10.700z" fill="none" stroke="#2b3a55" stroke-width="1.3" stroke-linejoin="round"/></svg>
<svg class="i" style="left:984.5px;top:698px" width="11" height="11" viewBox="0 0 11 11" ><path d="M1 4V1h3M1.200 1.200l3 3M7 1h3v3M9.800 1.200l-3 3M1 7v3h3M1.200 9.800l3-3M10 7v3H7M9.800 9.800l-3-3" fill="none" stroke="#fff" stroke-width="1.200"/></svg>
<svg class="i" style="left:1130.5px;top:429.5px" width="29" height="23" viewBox="0 0 29 23" ><rect x="1.700" y="1.550" width="25.600" height="19.750" rx="3.200" fill="none" stroke="#1c4078" stroke-width="1.900"/><path d="M1.700 6.900h25.600" stroke="#1c4078" stroke-width="2.500"/><path d="M4.900 14.500h9.400M4.900 17.500h5.200" stroke="#2a3f5c" stroke-width="1.700"/></svg>
<svg class="i" style="left:1272px;top:504px" width="28" height="24" viewBox="0 0 28 24" ><rect x="1.200" y="7.300" width="25.600" height="7.400" rx="3.700" fill="none" stroke="#1c4078" stroke-width="1.700" stroke-linecap="round" stroke-linejoin="round"/><rect x="1.200" y="15.300" width="25.600" height="7.600" rx="3.800" fill="none" stroke="#1c4078" stroke-width="1.700" stroke-linecap="round" stroke-linejoin="round"/><path d="M1.800 9.200L6.300 2.900a3 3 0 0 1 2.400-1.300h10.600a3 3 0 0 1 2.400 1.300l4.500 6.300" fill="none" stroke="#1c4078" stroke-width="1.700" stroke-linecap="round" stroke-linejoin="round"/><path d="M18.400 11h.1M22.200 11h.1M18.400 19.100h.1M22.200 19.100h.1" fill="none" stroke="#1c4078" stroke-width="1.700" stroke-linecap="round" stroke-linejoin="round"/></svg>
<svg class="i" style="left:1605.5px;top:505px" width="27.5" height="23" viewBox="0 0 27.500 23" ><rect x="1.700" y="1.900" width="23.800" height="13.900" rx="2.200" fill="none" stroke="#1c4078" stroke-width="1.900"/><path d="M2 5.200a3.200 3.200 0 0 0 2.900-3M22.300 2.200a3.200 3.200 0 0 0 2.900 3M2 12.500a3.200 3.200 0 0 1 2.900 3M22.300 15.500a3.200 3.200 0 0 1 2.900-3" fill="none" stroke="#1c4078" stroke-width="1.500"/><circle cx="13.700" cy="8.900" r="3.900" fill="none" stroke="#1c4078" stroke-width="1.500"/><path d="M6.200 8.900h.1M21.400 8.900h.1M.9 19.400c7-.2 14 .7 20.800 2.600a1.500 1.500 0 0 0 1.900-1.400v-1.400" fill="none" stroke="#1c4078" stroke-width="1.700" stroke-linecap="round" stroke-linejoin="round"/></svg>
<svg class="i" style="left:1272.5px;top:656px" width="25.5" height="25" viewBox="0 0 25.500 25" ><rect x="1.200" y="3.400" width="23" height="20.400" rx="3" fill="none" stroke="#043a86" stroke-width="2"/><path d="M1.200 6.400a3 3 0 0 1 3-3h17a3 3 0 0 1 3 3v2.800h-23z" fill="#043a86"/><path d="M6.800 1v3M18.600 1v3" stroke="#043a86" stroke-width="2" stroke-linecap="round"/></svg>
<svg class="i" style="left:1605px;top:657px" width="28.5" height="22" viewBox="0 0 28.500 22" ><path d="M4.800 7.800V6.500A4.500 4.500 0 0 1 9.300 2h9.700a4.500 4.500 0 0 1 4.500 4.500v4.800M23.500 14.700v1.700a4.500 4.500 0 0 1-4.500 4.500H9.300a4.500 4.500 0 0 1-4.500-4.500v-5.300" fill="none" stroke="#1c4078" stroke-width="1.700" stroke-linecap="round" stroke-linejoin="round"/><path d="M19.200 7.400l4.300 4.100 4.400-4.100M.5 15.500l4.300-4.400 4.400 4.400" fill="none" stroke="#1c4078" stroke-width="1.700" stroke-linecap="round" stroke-linejoin="round"/></svg>
<svg class="i" style="left:1646.5px;top:701px" width="13.5" height="13.5" viewBox="0 0 14 14" ><circle cx="7" cy="7" r="6.200" fill="none" stroke="#a4a7ad" stroke-width="1"/><path d="M5.100 5.400a1.950 1.950 0 1 1 2.700 1.800c-.6.300-.8.600-.8 1.300" fill="none" stroke="#a4a7ad" stroke-width="1" stroke-linecap="round"/><circle cx="7" cy="10.300" r=".7" fill="#a4a7ad"/></svg>
<svg class="i" style="left:1227.5px;top:796px" width="14" height="14" viewBox="0 0 14 14" ><path d="M12.400 6.200A5.400 5.400 0 0 0 2.900 3.600M1.600 7.800a5.400 5.400 0 0 0 9.500 2.600" fill="none" stroke="#fff" stroke-width="1.600"/><path d="M.6 1.300l.5 4.200 4.100-.8zM13.400 12.700l-.5-4.200-4.100.8z" fill="#fff"/></svg>
<svg class="i" style="left:1548.5px;top:796px" width="14.5" height="14.5" viewBox="0 0 14.500 14.500" ><circle cx="7.250" cy="7.250" r="7.100" fill="#d5333f"/><path d="M5.100 5.100l4.300 4.300M9.400 5.100L5.100 9.400" stroke="#fff" stroke-width="1.200" stroke-linecap="round"/></svg>
<svg class="i" style="left:416px;top:894px" width="28" height="26" viewBox="0 0 28 26" ><path d="M.4 .9h27.400M3 .9v14.800a3 3 0 0 0 3 3h16.200a3 3 0 0 0 3-3V.9M8.600 18.700L6.700 25.500M19.400 18.700l1.900 6.800M7.800 22.800h12.400" fill="none" stroke="#1c4078" stroke-width="1.700" stroke-linecap="round" stroke-linejoin="round" stroke-linecap="butt"/><path d="M9.800 11.800v2.800M14 8.800v5.800M18 5.500v9.100" fill="none" stroke="#3a4b60" stroke-width="1.900"/></svg>
<svg class="i" style="left:428.5px;top:966.5px" width="27" height="27" viewBox="0 0 27 27" ><rect x="4.400" y="4.400" width="18.200" height="18.200" rx="3.200" fill="none" stroke="#043a86" stroke-width="3.600"/><rect x="7.900" y="7.900" width="11.200" height="11.200" rx=".6" fill="#043a86"/><path d="M8.500 .4v2.600M11.800 .4v2.600M15.200 .4v2.600M18.500 .4v2.600M8.500 24v2.600M11.800 24v2.600M15.200 24v2.600M18.500 24v2.600M.4 8.500h2.600M.4 11.800h2.600M.4 15.200h2.600M.4 18.500h2.600M24 8.500h2.600M24 11.800h2.600M24 15.200h2.600M24 18.500h2.600" stroke="#043a86" stroke-width="2"/></svg>
<svg class="i" style="left:759.5px;top:965.3px" width="27.5" height="29" viewBox="0 .7 27.500 26.400" preserveAspectRatio="none"><path d="M13.750 1L1 7.400l12.750 6.400L26.500 7.400z" fill="#043a86"/><path d="M4.200 12.300L1 13.900l12.750 6.400L26.500 13.900l-3.200-1.600-9.550 4.800z" fill="#043a86"/><path d="M4.200 18.800L1 20.400l12.750 6.400L26.500 20.400l-3.200-1.600-9.550 4.800z" fill="#043a86"/></svg>
<svg class="i" style="left:0;top:0" width="1920" height="1080" viewBox="0 0 1920 1080"><path d="M616.84 1056.16A57.5 57.5 0 1 1 698.16 1056.16" fill="none" stroke="#eeeeef" stroke-width="5" stroke-linecap="round"/><path d="M616.84 1056.16A57.5 57.5 0 0 1 600.22 1020.55" fill="none" stroke="#72b873" stroke-width="6.5" stroke-linecap="round"/></svg>
<svg class="i" style="left:0;top:0" width="1920" height="1080" viewBox="0 0 1920 1080"><path d="M947.84 1056.16A57.5 57.5 0 1 1 1029.16 1056.16" fill="none" stroke="#eeeeef" stroke-width="5" stroke-linecap="round"/><path d="M947.84 1056.16A57.5 57.5 0 0 1 988.50 958.00" fill="none" stroke="#0a3b86" stroke-width="6" stroke-linecap="round"/></svg>
<svg class="i" style="left:1130.5px;top:897.5px" width="29.5" height="26.5" viewBox="0 0 29.500 26.500" ><path d="M26.200 7.800V5.200A4.500 4.500 0 0 0 21.700.7H5.200A4.500 4.500 0 0 0 .7 5.200v9.550a4.500 4.500 0 0 0 4.500 4.500h2.200v6.650l4.800-6" fill="none" stroke="#1c4078" stroke-width="1.700" stroke-linecap="round" stroke-linejoin="round" stroke-width="1.600"/><path d="M14.500 7.500H25a3.500 3.500 0 0 1 3.500 3.500v5.400a3.500 3.500 0 0 1-3.500 3.500h-1.100v4.800l-4.400-4.800h-5a3.500 3.500 0 0 1-3.500-3.500V11a3.500 3.500 0 0 1 3.500-3.500z" fill="none" stroke="#1c4078" stroke-width="1.700" stroke-linecap="round" stroke-linejoin="round" stroke-width="1.600"/></svg>
<svg class="i" style="left:1675.5px;top:903.5px" width="15" height="15" viewBox="0 0 15 15" ><path d="M6.500.6h2l.4 1.900 1.300.55 1.650-1.050 1.400 1.400-1.050 1.650.55 1.300 1.900.4v2l-1.900.4-.55 1.300 1.050 1.650-1.400 1.400-1.650-1.050-1.300.55-.4 1.900h-2l-.4-1.900-1.300-.55-1.650 1.050-1.400-1.400 1.050-1.650-.55-1.300-1.900-.4v-2l1.900-.4.55-1.300L1.150 3.400l1.400-1.400L4.200 3.050l1.300-.55z" fill="#fff" stroke="#fff" stroke-width=".8" stroke-linejoin="round"/><circle cx="7.500" cy="7.500" r="2.300" fill="#05388a"/></svg>
<span class="t" style="left:52.7px;top:74.5px;font-size:16px;line-height:20px;color:#fff;font-weight:700;letter-spacing:0.13px;">Order a Service</span>
<span class="t" style="left:55.7px;top:123.5px;font-size:16px;line-height:20px;color:#2a2e37;letter-spacing:0.47px;">Dashboard</span>
<span class="t" style="left:55.7px;top:171.5px;font-size:16px;line-height:20px;color:#2a2e37;letter-spacing:0.47px;">Servers</span>
<span class="t" style="left:55.7px;top:219.5px;font-size:16px;line-height:20px;color:#2a2e37;letter-spacing:0.52px;">Shared Hosting</span>
<span class="t" style="left:55.7px;top:263.8px;font-size:16px;line-height:20px;color:#2a2e37;letter-spacing:0.87px;">Networking</span>
<span class="t" style="left:55.7px;top:316.0px;font-size:16px;line-height:20px;color:#2a2e37;letter-spacing:0.67px;">Orchestration</span>
<span class="t" style="left:55.7px;top:363.5px;font-size:16px;line-height:20px;color:#2a2e37;letter-spacing:0.46px;">Orders</span>
<span class="t" style="left:55.7px;top:421.2px;font-size:16px;line-height:20px;color:#2a2e37;letter-spacing:0.75px;">Support</span>
<span class="t" style="left:55.7px;top:469.2px;font-size:16px;line-height:20px;color:#2a2e37;letter-spacing:0.38px;">Billing</span>
<span class="t" style="left:56.7px;top:517.2px;font-size:16px;line-height:20px;color:#2a2e37;letter-spacing:0.57px;">Affiliates</span>
<span class="t" style="left:56.7px;top:858.5px;font-size:16px;line-height:20px;color:#1a4480;letter-spacing:-0.10px;">API</span>
<span class="t" style="left:55.7px;top:907.2px;font-size:16px;line-height:20px;color:#1a4480;letter-spacing:0.51px;">Help Center</span>
<span class="t" style="left:56.7px;top:954.5px;font-size:16px;line-height:20px;color:#1a4480;letter-spacing:0.02px;">VPSBG Website</span>
<span class="t" style="left:55.7px;top:1003.0px;font-size:16px;line-height:20px;color:#1a4480;letter-spacing:0.37px;">Share Feedback</span>
<span class="t" style="left:55.7px;top:1051.5px;font-size:16px;line-height:20px;color:#2a2e37;letter-spacing:0.66px;">Logout</span>
<span class="t" style="left:331.2px;top:22.5px;font-size:16px;line-height:20px;color:#2a2e37;letter-spacing:0.53px;">Two-Factor Authentication (2FA) is disabled.</span>
<span class="t" style="left:671.2px;top:22.5px;font-size:16px;line-height:20px;color:#1570c0;font-weight:700;letter-spacing:0.07px;">Activate now</span>
<span class="t" style="left:1328.0px;top:16.0px;font-size:12px;line-height:15px;color:#666b75;letter-spacing:0.22px;">Balance</span>
<span class="t" style="left:1329.0px;top:29.6px;font-size:16px;line-height:20px;color:#2a2e37;font-weight:700;letter-spacing:1.50px;">€300.00</span>
<span class="t" style="left:1748.0px;top:22.5px;font-size:16px;line-height:20px;color:#2a2e37;letter-spacing:0.47px;">Username</span>
<span class="t" style="left:389.2px;top:116.3px;font-size:29.5px;line-height:37px;color:#202329;font-weight:700;letter-spacing:0.28px;">Manage Server</span>
<span class="t" style="left:1668.0px;top:125.6px;font-size:16px;line-height:20px;color:#2a2e37;letter-spacing:0.41px;">Back to Servers</span>
<span class="t" style="left:443.4px;top:212.2px;font-size:16px;line-height:20px;color:#15171c;font-weight:700;letter-spacing:0.44px;">ubuntu-vps-4gb-cloud-fra1-11</span>
<span class="t" style="left:809.2px;top:212.2px;font-size:16px;line-height:20px;color:#15171c;font-weight:700;letter-spacing:0.31px;">Windows Server 2022</span>
<span class="t" style="left:442.9px;top:259.8px;font-size:14px;line-height:18px;color:#1c1f25;letter-spacing:0.13px;">IPv4: 48.112.215.80</span>
<span class="t" style="left:648.7px;top:259.8px;font-size:14px;line-height:18px;color:#1c1f25;letter-spacing:0.47px;">IPv6: 2a01:5a8:306:c931:6a64:a378:b8b5:c093</span>
<span class="t" style="left:451.2px;top:326.4px;font-size:16px;line-height:20px;color:#0c3c82;letter-spacing:0.47px;">Overview</span>
<span class="t" style="left:594.7px;top:326.4px;font-size:16px;line-height:20px;color:#1c1f25;letter-spacing:0.58px;">Addons</span>
<span class="t" style="left:722.5px;top:326.4px;font-size:16px;line-height:20px;color:#3b3f46;letter-spacing:0.60px;">Snapshots</span>
<span class="t" style="left:873.7px;top:326.4px;font-size:16px;line-height:20px;color:#3b3f46;letter-spacing:0.55px;">Backups</span>
<span class="t" style="left:1012.0px;top:326.4px;font-size:16px;line-height:20px;color:#1c1f25;letter-spacing:0.87px;">Networking</span>
<span class="t" style="left:1170.2px;top:326.4px;font-size:16px;line-height:20px;color:#1c1f25;letter-spacing:0.15px;">Scale</span>
<span class="t" style="left:1283.1px;top:326.4px;font-size:16px;line-height:20px;color:#1c1f25;letter-spacing:0.38px;">Graphs</span>
<span class="t" style="left:1409.0px;top:326.4px;font-size:16px;line-height:20px;color:#1c1f25;letter-spacing:0.38px;">Reinstall</span>
<span class="t" style="left:1544.2px;top:326.4px;font-size:16px;line-height:20px;color:#1c1f25;letter-spacing:0.69px;">Settings</span>
<span class="t" style="left:1542.0px;top:212.0px;font-size:16px;line-height:20px;color:#22262e;letter-spacing:0.55px;">Console</span>
<span class="t" style="left:1650.7px;top:212.0px;font-size:16px;line-height:20px;color:#fff;letter-spacing:0.90px;">Shutdown</span>
<span class="t" style="left:1753.2px;top:212.6px;font-size:12px;line-height:15px;color:#fff;font-weight:700;letter-spacing:0.15px;">···</span>
<span class="t" style="left:457.6px;top:426.9px;font-size:24px;line-height:30px;color:#23262c;letter-spacing:1.14px;-webkit-text-stroke:1.0px #23262c;">Technical Information</span>
<span class="t" style="left:425.7px;top:486.7px;font-size:14px;line-height:18px;color:#1d2026;font-weight:700;letter-spacing:0.12px;">Server Information</span>
<span class="t" style="left:759.5px;top:486.7px;font-size:14px;line-height:18px;color:#1d2026;font-weight:700;letter-spacing:0.21px;">Network Information</span>
<span class="t" style="left:429.9px;top:533.2px;font-size:14px;line-height:18px;color:#9b9ea4;letter-spacing:0.59px;">Hostname</span>
<span class="t" style="left:429.9px;top:558.7px;font-size:20px;line-height:25px;color:#23262c;font-weight:700;letter-spacing:0.59px;">ubuntu-vps-4gb-cloud-fra...</span>
<span class="t" style="left:429.9px;top:595.2px;font-size:14px;line-height:18px;color:#9b9ea4;letter-spacing:0.47px;">Operating System</span>
<span class="t" style="left:430.9px;top:620.7px;font-size:20px;line-height:25px;color:#23262c;font-weight:700;letter-spacing:0.43px;">Windows Server 2022</span>
<span class="t" style="left:763.3px;top:533.2px;font-size:14px;line-height:18px;color:#9b9ea4;letter-spacing:0.13px;">IPv4</span>
<span class="t" style="left:764.3px;top:554.7px;font-size:20px;line-height:25px;color:#23262c;font-weight:700;letter-spacing:0.44px;">48.112.215.80</span>
<span class="t" style="left:763.3px;top:599.2px;font-size:14px;line-height:18px;color:#9b9ea4;letter-spacing:0.13px;">IPv6</span>
<span class="t" style="left:763.3px;top:620.7px;font-size:20px;line-height:25px;color:#23262c;font-weight:700;letter-spacing:0.77px;">2a01:5a8:306:c931</span>
<span class="t" style="left:425.7px;top:692.8px;font-size:14px;line-height:18px;color:#1d2026;font-weight:700;letter-spacing:0.05px;">Resource Details</span>
<span class="t" style="left:1004.7px;top:694.4px;font-size:14px;line-height:18px;color:#fff;letter-spacing:0.25px;">Scale</span>
<span class="t" style="left:430.9px;top:745.0px;font-size:14px;line-height:18px;color:#9b9ea4;letter-spacing:0.03px;">vCPU</span>
<span class="t" style="left:429.9px;top:771.0px;font-size:24px;line-height:30px;color:#23262c;font-weight:700;letter-spacing:0.71px;">64 cores</span>
<span class="t" style="left:591.9px;top:745.0px;font-size:14px;line-height:18px;color:#9b9ea4;letter-spacing:0.35px;">RAM</span>
<span class="t" style="left:591.9px;top:771.0px;font-size:24px;line-height:30px;color:#23262c;font-weight:700;letter-spacing:-0.14px;">128 GB</span>
<span class="t" style="left:753.9px;top:746.6px;font-size:12px;line-height:15px;color:#6d7178;letter-spacing:-0.20px;">SSD</span>
<span class="t" style="left:753.9px;top:769.1px;font-size:24px;line-height:30px;color:#23262c;font-weight:700;letter-spacing:1.08px;">2048 GB</span>
<span class="t" style="left:915.9px;top:746.6px;font-size:12px;line-height:15px;color:#6d7178;letter-spacing:0.56px;">Bandwidth</span>
<span class="t" style="left:915.9px;top:769.1px;font-size:24px;line-height:30px;color:#23262c;font-weight:700;letter-spacing:0.43px;">100 TBps</span>
<span class="t" style="left:1170.9px;top:426.9px;font-size:24px;line-height:30px;color:#23262c;letter-spacing:1.09px;-webkit-text-stroke:1.0px #23262c;">Billing Information</span>
<span class="t" style="left:1218.0px;top:543.8px;font-size:18px;line-height:22px;color:#23262c;font-weight:700;letter-spacing:-0.30px;">Cloud VPS 1 GB</span>
<span class="t" style="left:1272.7px;top:568.8px;font-size:12.5px;line-height:16px;color:#3d4148;letter-spacing:0.20px;">Plan</span>
<span class="t" style="left:1577.9px;top:543.8px;font-size:18px;line-height:22px;color:#23262c;font-weight:700;letter-spacing:1.11px;">€1249.99</span>
<span class="t" style="left:1603.6px;top:568.8px;font-size:12.5px;line-height:16px;color:#3d4148;letter-spacing:0.10px;">Price</span>
<span class="t" style="left:1241.0px;top:696.7px;font-size:18px;line-height:22px;color:#484c53;font-weight:700;letter-spacing:-0.22px;">13.06.2025</span>
<span class="t" style="left:1232.0px;top:721.9px;font-size:12.5px;line-height:16px;color:#55595f;letter-spacing:0.07px;">Due Payment Date</span>
<span class="t" style="left:1577.0px;top:696.7px;font-size:18px;line-height:22px;color:#23262c;font-weight:700;letter-spacing:-1.00px;">Monthly</span>
<span class="t" style="left:1583.9px;top:721.9px;font-size:12.5px;line-height:16px;color:#2c3037;letter-spacing:0.10px;">Billing Cycle</span>
<span class="t" style="left:1250.7px;top:793.5px;font-size:16px;line-height:20px;color:#fff;letter-spacing:0.41px;">Renew Now</span>
<span class="t" style="left:1572.1px;top:793.5px;font-size:16px;line-height:20px;color:#cc3a48;letter-spacing:0.45px;">Cancel Service</span>
<span class="t" style="left:456.6px;top:892.9px;font-size:24px;line-height:30px;color:#23262c;letter-spacing:0.75px;-webkit-text-stroke:1.0px #23262c;">Resources</span>
<span class="t" style="left:426.2px;top:1009.4px;font-size:20px;line-height:25px;color:#23262c;font-weight:700;letter-spacing:0.15px;">CPU</span>
<span class="t" style="left:426.2px;top:1045.8px;font-size:14px;line-height:18px;color:#686c73;letter-spacing:0.25px;">2 Cores</span>
<span class="t" style="left:757.7px;top:1009.4px;font-size:20px;line-height:25px;color:#23262c;font-weight:700;letter-spacing:-0.05px;">RAM</span>
<span class="t" style="left:758.7px;top:1045.8px;font-size:14px;line-height:18px;color:#686c73;letter-spacing:0.08px;">4 GB / 8 GB</span>
<span class="t" style="left:633.2px;top:1001.1px;font-size:24px;line-height:30px;color:#25282e;letter-spacing:0.25px;">20%</span>
<span class="t" style="left:964.6px;top:1001.1px;font-size:24px;line-height:30px;color:#25282e;letter-spacing:0.40px;">50%</span>
<span class="t" style="left:1170.9px;top:896.5px;font-size:24px;line-height:30px;color:#23262c;letter-spacing:1.05px;-webkit-text-stroke:1.0px #23262c;">Support Plan</span>
<span class="t" style="left:1699.7px;top:902.2px;font-size:16px;line-height:20px;color:#fff;letter-spacing:0.80px;">Manage</span>
<span class="t" style="left:1157.9px;top:968.6px;font-size:24px;line-height:30px;color:#0e2548;font-weight:700;letter-spacing:0.38px;">Premium</span>
<span class="t" style="left:1158.9px;top:1011.8px;font-size:16px;line-height:20px;color:#686c73;letter-spacing:0.55px;">Ensure smooth operations with our best-in-class dedicated assistance and</span>
<span class="t" style="left:1158.9px;top:1035.8px;font-size:16px;line-height:20px;color:#686c73;letter-spacing:0.52px;">response times.</span>
</body></html>
